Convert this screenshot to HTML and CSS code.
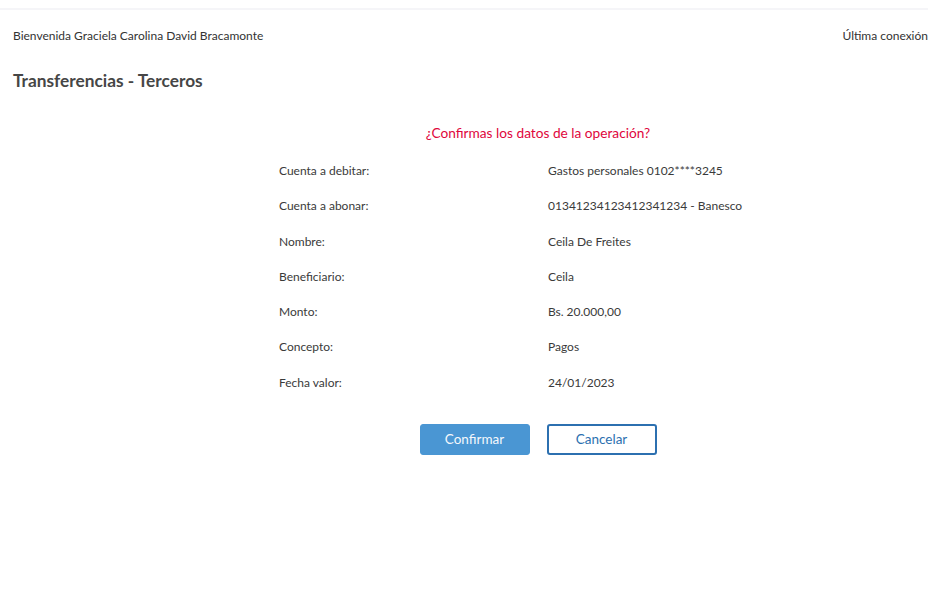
FILE: index.html
```html
<!DOCTYPE html>
<html lang="es">
<head>
<meta charset="utf-8">
<title>Transferencias - Terceros</title>
<link rel="stylesheet" href="styles.css">
</head>
<body>
<div class="topbar"></div>
<header class="welcome">
  <span class="hello">Bienvenida Graciela Carolina David Bracamonte</span>
  <span class="last">Última conexión</span>
</header>
<h1 class="title">Transferencias - Terceros</h1>
<main class="confirm">
  <p class="question">¿Confirmas los datos de la operación?</p>
  <dl class="data">
    <dt>Cuenta a debitar:</dt><dd>Gastos personales 0102****3245</dd>
    <dt>Cuenta a abonar:</dt><dd>01341234123412341234 - Banesco</dd>
    <dt>Nombre:</dt><dd>Ceila De Freites</dd>
    <dt>Beneficiario:</dt><dd>Ceila</dd>
    <dt>Monto:</dt><dd>Bs. 20.000,00</dd>
    <dt>Concepto:</dt><dd>Pagos</dd>
    <dt>Fecha valor:</dt><dd>24/01/2023</dd>
  </dl>
  <div class="actions">
    <button class="btn btn-primary">Confirmar</button>
    <button class="btn btn-outline">Cancelar</button>
  </div>
</main>
</body>
</html>
```
FILE: styles.css
```css
* { box-sizing: border-box; }
html, body { margin: 0; padding: 0; background: #fff; }
body {
  font-family: Lato, "Noto Sans", sans-serif;
  color: #3a3a3a;
  overflow: hidden;
  width: 928px;
}
.topbar {
  height: 10px;
  background: #fff;
  border-bottom: 2px solid #f5f5f8;
}
.welcome {
  display: flex;
  justify-content: space-between;
  padding: 18px 0 0 13px;
  font-size: 12px;
  line-height: 16px;
  color: #333;
  white-space: nowrap;
}
.title {
  margin: 27px 0 0 13px;
  font-size: 17.3px;
  line-height: 20px;
  font-weight: 700;
  color: #464646;
}
.confirm {
  margin-left: 279px;
  width: 518px;
  padding-top: 33px;
}
.question {
  margin: 0;
  text-align: center;
  color: #e0063c;
  font-size: 13.7px;
  line-height: 18px;
}
.data {
  margin: 21px 0 0;
  display: grid;
  grid-template-columns: 269px 1fr;
  row-gap: 19.3px;
  font-size: 12px;
  line-height: 16px;
  color: #3a3a3a;
}
.data dt, .data dd { margin: 0; }
.actions {
  display: flex;
  justify-content: center;
  gap: 17px;
  margin-top: 33px;
}
.btn {
  width: 110px;
  height: 31px;
  border-radius: 3px;
  font-family: inherit;
  font-size: 13.5px;
  cursor: pointer;
}
.btn-primary {
  background: #4a96d3;
  border: 1px solid #4a96d3;
  color: #f4f8fc;
}
.btn-outline {
  background: #fff;
  border: 2px solid #2c70b0;
  color: #2c70b0;
}
```
